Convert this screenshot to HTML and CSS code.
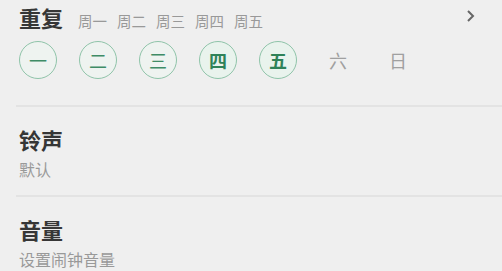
FILE: index.html
```html
<!DOCTYPE html>
<html lang="zh">
	<head>
		<meta charset="UTF-8" />
		<meta name="viewport" content="width=device-width, initial-scale=1.0" />
		<title>闹钟设置</title>
		<link rel="stylesheet" href="styles.css">
	</head>
	<body>
		<div class="item repeat">
			<div class="head">
				<span class="title">重复</span>
				<span class="days">
					<span>周一</span>
					<span>周二</span>
					<span>周三</span>
					<span>周四</span>
					<span>周五</span>
				</span>
				<svg class="arrow" width="10" height="14" viewBox="0 0 10 14">
					<polyline points="3,2 8,7 3,12" fill="none" stroke="#666" stroke-width="2" />
				</svg>
			</div>
			<div class="weekdays">
				<span class="day on">一</span>
				<span class="day on">二</span>
				<span class="day on">三</span>
				<span class="day on strong">四</span>
				<span class="day on strong">五</span>
				<span class="day">六</span>
				<span class="day">日</span>
			</div>
		</div>
		<div class="divider"></div>
		<div class="item">
			<div class="title">铃声</div>
			<div class="sub">默认</div>
		</div>
		<div class="divider"></div>
		<div class="item last">
			<div class="title">音量</div>
			<div class="sub">设置闹钟音量</div>
		</div>
	</body>
</html>
```

FILE: styles.css
```css
body {
	margin: 0;
	background-color: #efefef;
	font-family: "Noto Sans CJK SC", "Noto Sans", sans-serif;
	color: #333;
}
.item {
	padding: 0 19px;
}
.repeat {
	padding-top: 2px;
	padding-bottom: 26px;
}
.head {
	display: flex;
	align-items: baseline;
	height: 30px;
}
.title {
	font-size: 22px;
	font-weight: bold;
	line-height: 26px;
	color: #363636;
}
.head .title {
	line-height: 30px;
}
.days {
	display: flex;
	gap: 10px;
	margin-left: 15px;
	font-size: 14.5px;
	color: #999;
}
.arrow {
	margin-left: auto;
	margin-right: 8px;
	margin-top: 7px;
	align-self: flex-start;
}
.weekdays {
	display: flex;
	gap: 22px;
	margin-top: 9px;
}
.day {
	display: flex;
	align-items: center;
	justify-content: center;
	width: 38px;
	height: 38px;
	font-size: 18px;
	color: #a0a0a0;
}
.day.on {
	box-sizing: border-box;
	border: 1.5px solid #8fc4a9;
	border-radius: 50%;
	color: #3f8c66;
	background-color: #eef3f0;
}
.day.strong {
	font-weight: bold;
	color: #2f8258;
	background-color: #e9f3ed;
}
.divider {
	height: 2px;
	margin-left: 16px;
	background-color: #e3e3e3;
}
.item .sub {
	margin-top: 7px;
	font-size: 16px;
	line-height: 20px;
	color: #999;
}
.divider + .item {
	padding-top: 19px;
	padding-bottom: 16px;
}
.divider + .item.last {
	padding-bottom: 0;
}
```
